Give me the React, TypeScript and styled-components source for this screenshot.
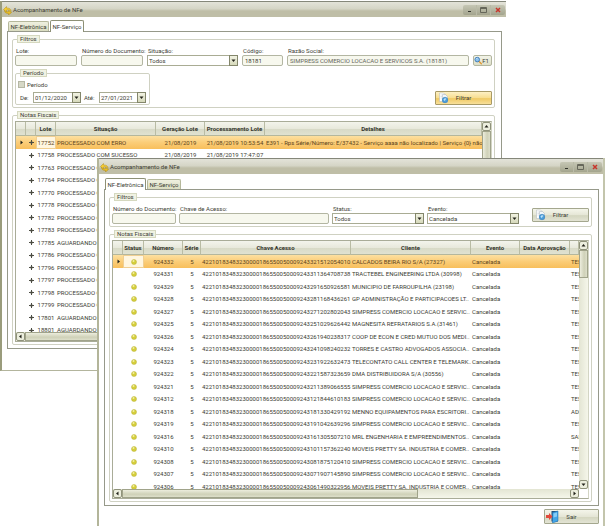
import React from "react";
import styled, { createGlobalStyle, css } from "styled-components";

const GlobalStyle = createGlobalStyle`
  *, *::before, *::after { box-sizing: border-box; }
  html, body { margin: 0; padding: 0; background: #fff; }
  body, button, input, select, table {
    font-family: Roboto, "Liberation Sans", Arial, sans-serif;
    font-size: 6px;
    line-height: 8px;
    color: #3c3d34;
  }
`;

const Desktop = styled.main`
  position: relative;
  height: 100vh;
  min-height: 526px;
  overflow: hidden;
`;

const Window = styled.section<{ $front?: boolean }>`
  position: absolute;
  background: #fff;
  border-left: 2px solid #9a9c7c;
  ${(p) =>
    p.$front
      ? css`
          top: 158px;
          left: 97px;
          right: 0;
          bottom: 0;
          border-left-color: #b3b59a;
          border-right: 2px solid #c3c5ac;
        `
      : css`
          top: 1px;
          left: 0;
          right: 99px;
          border-bottom: 1px solid #b3b59d;
          padding-bottom: 21px;
        `}
`;

const TitleBar = styled.header`
  display: flex;
  align-items: center;
  gap: 1px;
  height: 16px;
  padding: 1px 1px 0 1px;
  border-top: 1px solid #85877a;
  background: linear-gradient(#e3e3d9, #d5d5c6 45%, #bfbea7 60%, #bfbea7);
`;

const Title = styled.h1`
  flex: 1;
  margin: 0;
  font-size: 6px;
  font-weight: 400;
  color: #3c3d34;
`;

const WindowButtons = styled.div`
  display: flex;
  height: 10px;
  border-radius: 2px;
  background: linear-gradient(#c6c7b5, #a3a48d);
`;

const WindowButton = styled.button`
  display: grid;
  place-items: center;
  width: 14px;
  padding: 0;
  border: 0;
  border-right: 1px solid #b9baa7;
  background: none;
  &:last-child { border-right: 0; }
`;

const Body = styled.div<{ $front?: boolean }>`
  padding: ${(p) => (p.$front ? "4px 4px 0 5px" : "3px 4px 0 5px")};
`;

const Tabs = styled.div`
  display: flex;
  align-items: flex-end;
  gap: 1px;
  height: 11px;
  padding-left: 1px;
`;

const Tab = styled.button<{ $active?: boolean; $wide?: boolean }>`
  height: ${(p) => (p.$active ? 12 : 10)}px;
  width: ${(p) => (p.$wide ? 41 : 34)}px;
  margin-bottom: ${(p) => (p.$active ? -1 : 0)}px;
  padding: 0;
  border: 1px solid ${(p) => (p.$active ? "#8d9076" : "#b5b89b")};
  border-bottom: 0;
  border-radius: 2px 2px 0 0;
  white-space: nowrap;
  background: ${(p) => (p.$active ? "#fff" : "linear-gradient(#eff0e0, #d9dcc0)")};
`;

const TabPanel = styled.div`
  display: flex;
  flex-direction: column;
  gap: 3px;
  padding: 3px 6px 3px 4px;
  border: 1px solid #96998a;
`;

const Group = styled.fieldset`
  min-width: 0;
  margin: 0;
  padding: 2px;
  border: 1px solid #cfd1c2;
  border-radius: 2px;
`;

const FilterGroup = styled(Group)`
  padding-top: 4px;
`;

const Legend = styled.legend`
  height: 8px;
  margin-left: 2px;
  padding: 0 2px;
  line-height: 6px;
  border: 1px solid #d5d8bf;
  background: #f0f2e3;
`;

const FilterGrid = styled.div<{ $cols: string; $gap: number }>`
  display: grid;
  grid-template-columns: ${(p) => p.$cols};
  column-gap: ${(p) => p.$gap}px;
  align-items: end;
`;

const FieldBox = styled.div`
  display: flex;
  flex-direction: column;
  min-width: 0;
`;

const FieldLabel = styled.label`
  padding-left: 1px;
  white-space: nowrap;
`;

const TextInput = styled.input`
  width: 100%;
  height: 11px;
  padding: 0 2px;
  border: 1px solid #b3b6a2;
  border-radius: 2px;
  background: #f7f8ee;
  &:disabled { color: #66675d; }
`;

const Combo = styled.div`
  position: relative;
  width: 100%;
  height: 11px;
`;

const comboBox = css`
  display: block;
  width: 100%;
  height: 11px;
  padding: 0 9px 0 1px;
  border: 1px solid #a9ac94;
  border-radius: 0;
  background: #fff;
`;

const Select = styled.select`
  ${comboBox}
  appearance: none;
`;

const DateInput = styled.input`
  ${comboBox}
`;

const ComboArrow = styled.span`
  position: absolute;
  top: 0;
  right: 0;
  display: grid;
  place-items: center;
  width: 9px;
  height: 11px;
  border: 1px solid #83866b;
  background: linear-gradient(#f1f2e2, #d6d9bb);
  pointer-events: none;
`;

const FilterBottom = styled.div`
  display: flex;
  align-items: flex-end;
  justify-content: space-between;
  margin-top: 3px;
`;

const PeriodGroup = styled(Group)`
  width: 135px;
  padding: 3px 3px 1px 2px;
`;

const CheckRow = styled.label`
  display: flex;
  align-items: center;
  gap: 2px;
  height: 9px;
`;

const CheckBox = styled.input`
  appearance: none;
  width: 7px;
  height: 7px;
  margin: 0;
  border: 1px solid #b5b7a4;
  background: #d6d8c6;
  &:checked { background: #6f7256; }
`;

const DateRow = styled.div`
  display: grid;
  grid-template-columns: 14px 48px 16px 47px;
  align-items: center;
  column-gap: 1px;
  margin-top: 3px;
  label { padding-left: 2px; }
`;

const ActionButton = styled.button<{ $hot?: boolean; $tall?: boolean }>`
  display: grid;
  grid-template-columns: 12px 1fr 12px;
  align-items: center;
  justify-items: center;
  width: ${(p) => (p.$tall ? 55 : 57)}px;
  height: ${(p) => (p.$tall ? 15 : 14)}px;
  padding: 0 1px;
  border: 1px solid ${(p) => (p.$hot ? "#a89a66" : "#a4a78e")};
  border-radius: 1px;
  background: ${(p) =>
    p.$hot
      ? "linear-gradient(#fdf0c4, #f7dd8f 50%, #efc964 55%, #f8e09a)"
      : "linear-gradient(#f4f5ea, #e5e6d6 50%, #d4d6c0 55%, #e3e4d4)"};
`;

const LookupButton = styled.button`
  display: flex;
  align-items: center;
  justify-content: space-between;
  height: 11px;
  padding: 0 2px 0 0;
  border: 1px solid #b3b6a0;
  border-radius: 2px;
  background: linear-gradient(#f3f4e8, #dcdec8);
`;

const GridFrame = styled.div`
  display: grid;
  grid-template-columns: minmax(0, 1fr) 9px;
  grid-template-rows: auto 9px;
  border: 1px solid #a9ac98;
  border-right-color: #d3d5c4;
`;

const GridView = styled.div<{ $height: number }>`
  height: ${(p) => p.$height}px;
  overflow: hidden;
`;

const Table = styled.table`
  width: 100%;
  table-layout: fixed;
  border-collapse: separate;
  border-spacing: 0;
`;

const Col = styled.col<{ $w?: number }>`
  width: ${(p) => (p.$w ? `${p.$w}px` : "auto")};
`;

const HeadCell = styled.th`
  height: 14px;
  padding: 0;
  overflow: hidden;
  white-space: nowrap;
  color: #33342b;
  border-right: 1px solid #b9bca4;
  border-bottom: 1px solid #b4b79d;
  background: linear-gradient(#f3f4ec, #e8e9dc 50%, #d8dac7 55%, #e0e2d1);
`;

const Row = styled.tr<{ $selected?: boolean }>`
  height: 12px;
  &:nth-child(odd) { height: 13px; }
  ${(p) =>
    p.$selected &&
    css`
      color: #5d4520;
      background: linear-gradient(#fde0a0, #fbcd78 50%, #f8bf5c);
    `}
`;

const Cell = styled.td<{ $align?: string; $focus?: boolean }>`
  padding: 0 1px;
  overflow: hidden;
  white-space: nowrap;
  line-height: 8px;
  text-align: ${(p) => p.$align ?? "left"};
  vertical-align: middle;
  ${(p) =>
    p.$focus &&
    css`
      background: #fff6e0;
      box-shadow: inset 0 0 0 1px #f0cf92;
    `}
  svg { display: block; margin: 0 auto; }
`;

const Scroll = styled.div<{ $horizontal?: boolean }>`
  display: flex;
  flex-direction: ${(p) => (p.$horizontal ? "row" : "column")};
  background: linear-gradient(${(p) => (p.$horizontal ? "180deg" : "90deg")}, #e3e5d3, #f5f6ea);
`;

const ScrollButton = styled.button`
  display: grid;
  place-items: center;
  width: 9px;
  height: 9px;
  flex: none;
  padding: 0;
  border: 1px solid #8f927a;
  border-radius: 2px;
  background: #eceedd;
`;

const Track = styled.div<{ $horizontal?: boolean; $thumb: string }>`
  flex: 1;
  &::before {
    content: "";
    display: block;
    width: ${(p) => (p.$horizontal ? p.$thumb : "100%")};
    height: ${(p) => (p.$horizontal ? "100%" : p.$thumb)};
    border: 1px solid #a0a38a;
    background: linear-gradient(${(p) => (p.$horizontal ? "180deg" : "90deg")}, #eceddd, #cfd1b8 60%, #dddfca);
  }
`;

const FilterAction = styled.div`
  display: flex;
  justify-content: flex-end;
  padding-bottom: 2px;
`;

const Footer = styled.footer`
  display: flex;
  justify-content: flex-end;
  padding-top: 3px;
`;

const AppIcon = () => (
  <svg width="9" height="9" viewBox="0 0 18 18" aria-hidden="true">
    <path d="M1 7 7 1v3c6 0 9 2 9 7-2-3-5-4-9-3v4z" fill="#f6cd35" stroke="#b28f1c" />
    <path d="M17 13l-6 5v-3c-5 0-8-2-8-6 3 3 5 3 8 2V9z" fill="#ecbf24" stroke="#a98716" />
  </svg>
);

const FilterIcon = () => (
  <svg width="11" height="12" viewBox="0 0 22 24" aria-hidden="true">
    <path d="M3 2h8l3 3v14H3z" fill="#fff" stroke="#aeb6bd" />
    <path d="M9 5h6l4 4v12H9z" fill="#f3f7fa" stroke="#a3adb6" />
    <path d="M5 6h3M5 9h3M5 12h3" stroke="#b9c4cd" />
    <circle cx="14" cy="16" r="5.500" fill="#4c9edb" stroke="#2b76b3" />
    <path d="M11 15c2-3 5-3 6-1-2 0-2 3-4 4z" fill="#bfe2f7" />
  </svg>
);

const LookupIcon = () => (
  <svg width="9" height="9" viewBox="0 0 18 18" aria-hidden="true">
    <path d="m10 10 6 6" stroke="#e19a35" strokeWidth="3" strokeLinecap="round" />
    <circle cx="7" cy="7" r="5" fill="#8cc3ee" stroke="#3d78b5" strokeWidth="2" />
    <path d="M4 6c1-2 3-2 4-2" stroke="#fff" fill="none" />
  </svg>
);

const ExitIcon = () => (
  <svg width="13" height="13" viewBox="0 0 26 26" aria-hidden="true">
    <path d="M11 2h13v21H11z" fill="#274f78" />
    <path d="m13 5 11-3v20l-11 4z" fill="#42a5e8" stroke="#1d6bab" />
    <path d="m15 7 7-2v8l-7 2z" fill="#86cdf7" />
    <path d="M0 10h6V6l7 7-7 7v-4H0z" fill="#e14a3c" />
  </svg>
);

const Dot = () => (
  <svg width="6" height="6" viewBox="0 0 12 12" aria-hidden="true">
    <circle cx="6" cy="6" r="5" fill="#d6cf3a" stroke="#b9b23c" />
    <circle cx="5" cy="4" r="2" fill="#f2efa0" />
  </svg>
);

const turns = { down: 0, left: 90, up: 180, right: 270 };
const Arrow = ({ dir }: { dir: keyof typeof turns }) => (
  <svg width="5" height="5" viewBox="0 0 10 10" aria-hidden="true">
    <path d="M1 3h8L5 8z" fill="#22231b" transform={`rotate(${turns[dir]} 5 5)`} />
  </svg>
);

const Plus = () => (
  <svg width="5" height="5" viewBox="0 0 10 10" aria-hidden="true">
    <path d="M0 4h10v2H0z" fill="#4c4d43" />
    <path d="M4 0h2v10H4zM3 3h4v4H3z" fill="#4c4d43" />
  </svg>
);

function TitleStrip() {
  return (
    <TitleBar>
      <AppIcon />
      <Title>Acompanhamento de NFe</Title>
      <WindowButtons>
        <WindowButton aria-label="Minimizar">
          <svg width="6" height="6" viewBox="0 0 6 6"><path d="M1 4h3v1H1z" fill="#33342b" /></svg>
        </WindowButton>
        <WindowButton aria-label="Maximizar">
          <svg width="7" height="6" viewBox="0 0 7 6"><path d="M.5.5h6v5h-6zM.5 1.500h6" fill="none" stroke="#66675a" /></svg>
        </WindowButton>
        <WindowButton aria-label="Fechar">
          <svg width="6" height="6" viewBox="0 0 6 6"><path d="m1 1 4 4m0-4L1 5" stroke="#c8352b" strokeWidth="1.500" /></svg>
        </WindowButton>
      </WindowButtons>
    </TitleBar>
  );
}

function TextField({ id, label, value, disabled }: { id: string; label: string; value?: string; disabled?: boolean }) {
  return (
    <FieldBox>
      <FieldLabel htmlFor={id}>{label}</FieldLabel>
      <TextInput id={id} defaultValue={value} disabled={disabled} />
    </FieldBox>
  );
}

function SelectField({ id, label, value }: { id: string; label: string; value: string }) {
  return (
    <FieldBox>
      <FieldLabel htmlFor={id}>{label}</FieldLabel>
      <Combo>
        <Select id={id}><option>{value}</option></Select>
        <ComboArrow><Arrow dir="down" /></ComboArrow>
      </Combo>
    </FieldBox>
  );
}

function DateField({ id, label, value }: { id: string; label: string; value: string }) {
  return (
    <>
      <FieldLabel htmlFor={id}>{label}</FieldLabel>
      <Combo>
        <DateInput id={id} defaultValue={value} />
        <ComboArrow><Arrow dir="down" /></ComboArrow>
      </Combo>
    </>
  );
}

type Column = { title: string; width?: number; align?: string };

function DataGrid({ columns, rows, focus, height, vThumb, hThumb }: {
  columns: Column[];
  rows: React.ReactNode[][];
  focus: number;
  height: number;
  vThumb: string;
  hThumb: string;
}) {
  return (
    <GridFrame>
      <GridView $height={height}>
        <Table>
          <colgroup>{columns.map((c, i) => <Col key={i} $w={c.width} />)}</colgroup>
          <thead>
            <tr>{columns.map((c, i) => <HeadCell key={i} scope="col">{c.title}</HeadCell>)}</tr>
          </thead>
          <tbody>
            {rows.map((cells, r) => (
              <Row key={r} $selected={r === 0}>
                {cells.map((cell, i) => (
                  <Cell key={i} $align={columns[i].align} $focus={r === 0 && i === focus}>{cell}</Cell>
                ))}
              </Row>
            ))}
          </tbody>
        </Table>
      </GridView>
      <Scroll>
        <ScrollButton aria-label="Subir"><Arrow dir="up" /></ScrollButton>
        <Track $thumb={vThumb} />
        <ScrollButton aria-label="Descer"><Arrow dir="down" /></ScrollButton>
      </Scroll>
      <Scroll $horizontal>
        <ScrollButton aria-label="Esquerda"><Arrow dir="left" /></ScrollButton>
        <Track $horizontal $thumb={hThumb} />
        <ScrollButton aria-label="Direita"><Arrow dir="right" /></ScrollButton>
      </Scroll>
    </GridFrame>
  );
}

const serviceColumns: Column[] = [
  { title: "", width: 10, align: "center" },
  { title: "", width: 10, align: "center" },
  { title: "Lote", width: 20, align: "center" },
  { title: "Situação", width: 100 },
  { title: "Geração Lote", width: 49, align: "center" },
  { title: "Processamento Lote", width: 60, align: "center" },
  { title: "Detalhes" },
];

const OK = "PROCESSADO COM SUCESSO";
const WAIT = "AGUARDANDO PROCESSAMENTO";
const lots: [string, string][] = [
  ["17752", "PROCESSADO COM ERRO"], ["17758", OK], ["17763", OK], ["17764", OK],
  ["17770", OK], ["17778", OK], ["17782", OK], ["17783", OK], ["17785", WAIT],
  ["17786", OK], ["17796", OK], ["17797", OK], ["17798", OK], ["17799", OK],
  ["17801", WAIT], ["18801", WAIT],
];
const serviceRows = lots.map(([lot, status], i) => [
  i === 0 ? <Arrow dir="right" /> : "",
  <Plus />,
  lot,
  status,
  "21/08/2019",
  i === 0 ? "21/08/2019 10:53:54" : "21/08/2019 17:47:07",
  i === 0 ? "E391 - Rps Série/Número: E/37432 - Serviço aaaa não localizado | Serviço {0} não loc" : "",
]);

const invoiceColumns: Column[] = [
  { title: "", width: 10, align: "center" },
  { title: "Status", width: 21, align: "center" },
  { title: "Número", width: 39, align: "center" },
  { title: "Série", width: 18, align: "center" },
  { title: "Chave Acesso", width: 150 },
  { title: "Cliente" },
  { title: "Evento", width: 49 },
  { title: "Data Aprovação", width: 50 },
  { title: "", width: 9 },
];

const SIMPRESS = "SIMPRESS COMERCIO LOCACAO E SERVIC..";
const MOVEIS = "MOVEIS PRETTY SA. INDUSTRIA E COMER..";
const KEY = "4221018348323000018655005000";
const invoices: [string, string, string, string?][] = [
  ["924332", "1512054010", "CALCADOS BEIRA RIO S/A (27327)"],
  ["924331", "1364708738", "TRACTEBEL ENGINEERING LTDA (30998)"],
  ["924329", "1650926581", "MUNICIPIO DE FARROUPILHA  (23198)"],
  ["924328", "1168436261", "GP ADMINISTRAÇÃO E PARTICIPACOES LT.."],
  ["924327", "1202802043", SIMPRESS],
  ["924325", "1029626442", "MAGNESITA REFRATARIOS S.A.(31461)"],
  ["924326", "1940238317", "COOP DE ECON E CRED MUTUO DOS MEDI.."],
  ["924324", "1098240232", "TORRES E CASTRO ADVOGADOS ASSOCIA.."],
  ["924323", "1922632473", "TELECONTATO CALL CENTER E TELEMARK.."],
  ["924322", "1587323659", "DMA DISTRIBUIDORA S/A (30556)"],
  ["924321", "1389066555", SIMPRESS],
  ["924312", "1844610183", SIMPRESS],
  ["924318", "1330429192", "MENNO EQUIPAMENTOS PARA ESCRITORI..", "ADM"],
  ["924319", "1042639296", SIMPRESS],
  ["924316", "1305507210", "MRL ENGENHARIA E EMPREENDIMENTOS..", "SAN"],
  ["924310", "1157362240", MOVEIS],
  ["924308", "1875120410", SIMPRESS],
  ["924307", "1907145890", SIMPRESS],
  ["924306", "1490322956", MOVEIS],
];
const invoiceRows = invoices.map(([number, tail, client, user], i) => [
  i === 0 ? <Arrow dir="right" /> : "",
  <Dot />,
  number,
  "5",
  KEY + number + tail,
  client,
  "Cancelada",
  "",
  user ?? "TES",
]);

function ServiceWindow() {
  return (
    <Window>
      <TitleStrip />
      <Body>
        <Tabs>
          <Tab $wide>NF-Eletrônica</Tab>
          <Tab $active>NF-Serviço</Tab>
        </Tabs>
        <TabPanel>
          <FilterGroup>
            <Legend>Filtros</Legend>
            <FilterGrid $cols="62px 62px 91px 41px minmax(0, 1fr) 19px" $gap={4}>
              <TextField id="lote" label="Lote:" />
              <TextField id="documento" label="Número do Documento:" />
              <SelectField id="situacao" label="Situação:" value="Todos" />
              <TextField id="codigo" label="Código:" value="18181" />
              <TextField id="razao" label="Razão Social:" value="SIMPRESS COMERCIO LOCACAO E SERVICOS S.A. (18181)" disabled />
              <LookupButton><LookupIcon />F1</LookupButton>
            </FilterGrid>
            <FilterBottom>
              <PeriodGroup>
                <Legend>Período</Legend>
                <CheckRow><CheckBox type="checkbox" />Período</CheckRow>
                <DateRow>
                  <DateField id="de" label="De:" value="01/12/2020" />
                  <DateField id="ate" label="Até:" value="27/01/2021" />
                </DateRow>
              </PeriodGroup>
              <ActionButton $hot><FilterIcon />Filtrar</ActionButton>
            </FilterBottom>
          </FilterGroup>
          <Group>
            <Legend>Notas Fiscais</Legend>
            <DataGrid columns={serviceColumns} rows={serviceRows} focus={2} height={210} vThumb="40px" hThumb="60%" />
          </Group>
        </TabPanel>
      </Body>
    </Window>
  );
}

function InvoiceWindow() {
  return (
    <Window $front>
      <TitleStrip />
      <Body $front>
        <Tabs>
          <Tab $active $wide>NF-Eletrônica</Tab>
          <Tab>NF-Serviço</Tab>
        </Tabs>
        <TabPanel>
          <FilterGroup>
            <Legend>Filtros</Legend>
            <FilterGrid $cols="64px minmax(0, 1fr) 92px 92px 67px" $gap={3}>
              <TextField id="numero" label="Número do Documento:" />
              <TextField id="chave" label="Chave de Acesso:" />
              <SelectField id="status" label="Status:" value="Todos" />
              <SelectField id="evento" label="Evento:" value="Cancelada" />
              <FilterAction><ActionButton><FilterIcon />Filtrar</ActionButton></FilterAction>
            </FilterGrid>
          </FilterGroup>
          <Group>
            <Legend>Notas Fiscais</Legend>
            <DataGrid columns={invoiceColumns} rows={invoiceRows} focus={1} height={248} vThumb="28px" hThumb="66%" />
          </Group>
        </TabPanel>
        <Footer>
          <ActionButton $tall><ExitIcon />Sair</ActionButton>
        </Footer>
      </Body>
    </Window>
  );
}

export default function App() {
  return (
    <>
      <GlobalStyle />
      <Desktop>
        <ServiceWindow />
        <InvoiceWindow />
      </Desktop>
    </>
  );
}
